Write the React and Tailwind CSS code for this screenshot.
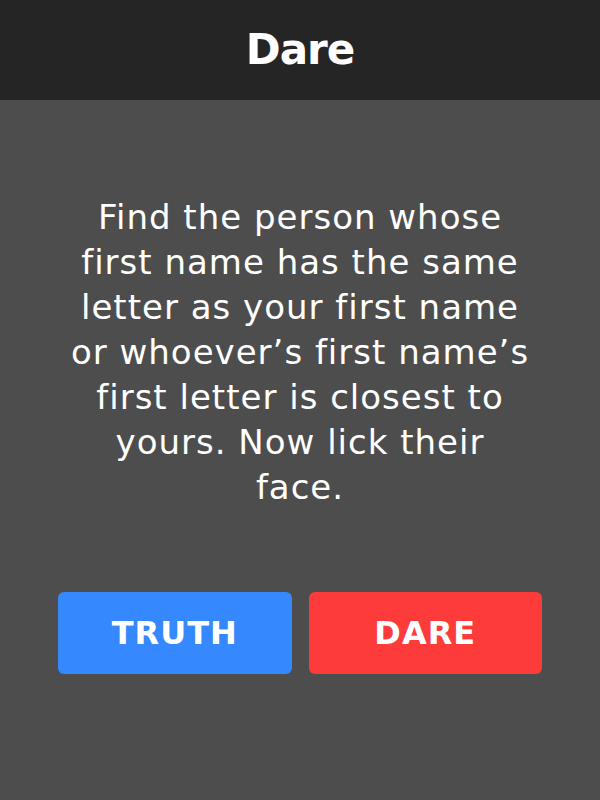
import React from 'react';

const lines = [
    'Find the person whose',
    'first name has the same',
    'letter as your first name',
    'or whoever\u2019s first name\u2019s',
    'first letter is closest to',
    'yours. Now lick their',
    'face.',
];

const App = () => {
    return (
        <div className="w-[600px] h-[800px] flex flex-col bg-[#4d4d4d] font-['DejaVu_Sans',sans-serif] text-white">
            <div className="h-[100px] bg-[#252525] flex items-center justify-center">
                <h1 className="text-[42px] font-bold leading-none tracking-[-1px]">Dare</h1>
            </div>
            <div className="flex-1 flex flex-col items-center px-[58px]">
                <p className="mt-[95px] text-[34px] leading-[45px] text-center tracking-[1px]">
                    {lines.map((l, i) => (
                        <span key={i} className="block whitespace-nowrap">{l}</span>
                    ))}
                </p>
                <div className="mt-[82px] w-full grid grid-cols-2 gap-[17px]">
                    <button className="h-[82px] rounded-md bg-[#3588fd] text-[32px] font-bold tracking-[1px]">TRUTH</button>
                    <button className="h-[82px] rounded-md bg-[#fd3b3b] text-[32px] font-bold tracking-[1px]">DARE</button>
                </div>
            </div>
        </div>
    );
};

export default App;
